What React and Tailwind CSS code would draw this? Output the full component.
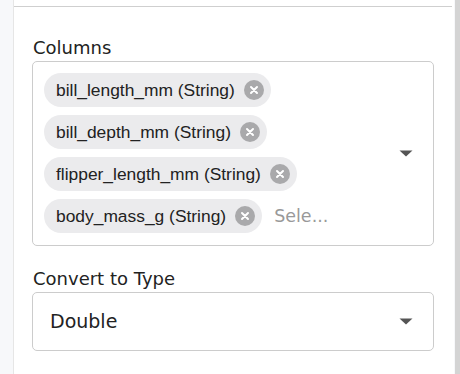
const chips = [
  'bill_length_mm (String)',
  'bill_depth_mm (String)',
  'flipper_length_mm (String)',
  'body_mass_g (String)',
];

const Caret = () => (
  <svg width="14" height="7" viewBox="0 0 14 7" className="shrink-0">
    <path d="M0.5 0.5 L13.5 0.5 L7 6.5 Z" fill="#555" />
  </svg>
);

const Chip = ({ label }) => (
  <div className="flex items-center h-[34px] rounded-full bg-[#ebebed] pl-3 pr-[7px] gap-[9px]">
    <span className="text-[17.4px] text-[#222] font-['Liberation_Sans',Arial,sans-serif]">{label}</span>
    <span className="flex items-center justify-center w-5 h-5 rounded-full bg-[#a9a9ab]">
      <svg width="10" height="10" viewBox="0 0 10 10">
        <path d="M2 2 L8 8 M8 2 L2 8" stroke="white" strokeWidth="2" strokeLinecap="round" />
      </svg>
    </span>
  </div>
);

export default function App() {
  return (
    <div className="flex w-[460px] h-[374px] bg-[#f7f8fa] overflow-hidden font-['DejaVu_Sans',sans-serif]">
      <div className="ml-[13px] w-[441px] bg-white border-l border-[#e6e6e6] pr-[2px]">
        <div className="h-[6px]" />
        <div className="h-px bg-[#cfcfcf]" />
        <div className="px-[18px] pt-[29px]">
          <div className="text-[18px] leading-6 text-[#222] mb-[1px] pl-px">Columns</div>
          <div className="flex items-center border border-[#cccccc] rounded-[5px] pl-[11px] pr-[20px] pt-[11px] pb-[12px]">
            <div className="flex-1 flex flex-wrap gap-y-2 gap-x-3 items-center">
              {chips.map((c) => (
                <Chip key={c} label={c} />
              ))}
              <span className="text-[17.5px] text-[#999]">Sele...</span>
            </div>
            <Caret />
          </div>
          <div className="text-[18px] leading-6 text-[#222] mt-[21px] mb-[1px] pl-px">Convert to Type</div>
          <div className="flex items-center justify-between border border-[#cccccc] rounded-[5px] h-[59px] pl-[17px] pr-[20px]">
            <span className="text-[19px] text-[#222]">Double</span>
            <Caret />
          </div>
        </div>
      </div>
      <div className="ml-px w-[5px] bg-[#d4d4d4]" />
    </div>
  );
}
